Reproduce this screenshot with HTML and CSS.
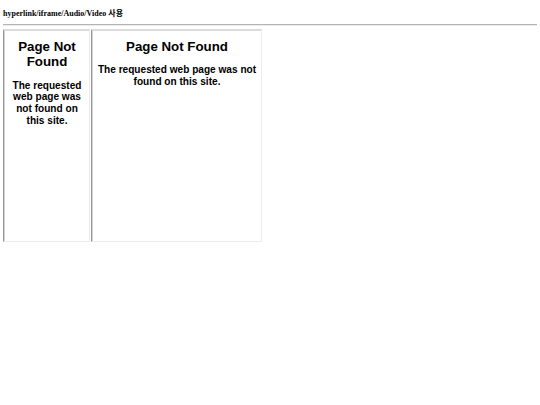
FILE: index.html
```html
<!DOCTYPE html>
<html lang="ko">

<head>
  <meta charset="UTF-8">
  <meta name="viewport" content="width=device-width, initial-scale=1.0">
  <title>hyperlink/iframe/Audio/Video 사용</title>
  <link rel="stylesheet" href="styles.css">
</head>

<body>
  <div class="page">
    <h1 class="title">hyperlink/iframe/Audio/Video 사용</h1>
    <hr class="rule">

    <div class="frames">
      <div class="frame frame-narrow">
        <div class="frame-page">
          <h2>Page Not Found</h2>
          <p>The requested web page was not found on this site.</p>
        </div>
      </div>
      <div class="frame frame-wide">
        <div class="frame-page">
          <h2>Page Not Found</h2>
          <p>The requested web page was not found on this site.</p>
        </div>
      </div>
    </div>
  </div>
</body>

</html>
```

FILE: styles.css
```css
/* Base styles */
body {
  margin: 0;
  padding: 0;
  background-color: #fff;
  font-family: "Liberation Serif", "Noto Sans CJK KR", serif;
}

.page {
  padding: 0 3px;
}

.title {
  font-size: 8px;
  line-height: 10px;
  font-weight: bold;
  margin: 9px 0 0;
}

.rule {
  margin: 5px 0 3px;
  border: none;
  border-top: 1px solid #b4b4b4;
  border-bottom: 1px solid #ececec;
}

/* Embedded frames */
.frames {
  display: flex;
  gap: 1px;
  align-items: flex-start;
}

.frame {
  box-sizing: border-box;
  height: 213px;
  border-top: 2px solid #dcdcdc;
  border-left: 1px solid #959595;
  border-right: 1px solid #ececec;
  border-bottom: 1px solid #ececec;
  box-shadow: inset 1px 0 0 #d4d4d4;
  overflow: hidden;
}

.frame-narrow {
  width: 87px;
}

.frame-wide {
  width: 171px;
}

.frame-page {
  padding: 8px 3px 0 4px;
  text-align: center;
  font-family: "Liberation Sans", Arial, sans-serif;
  color: #000;
}

.frame-page h2 {
  font-size: 13.3px;
  line-height: 15.3px;
  margin: 0 0 10px;
}

.frame-page p {
  font-size: 10.1px;
  line-height: 11.7px;
  font-weight: bold;
  margin: 0;
}
```
